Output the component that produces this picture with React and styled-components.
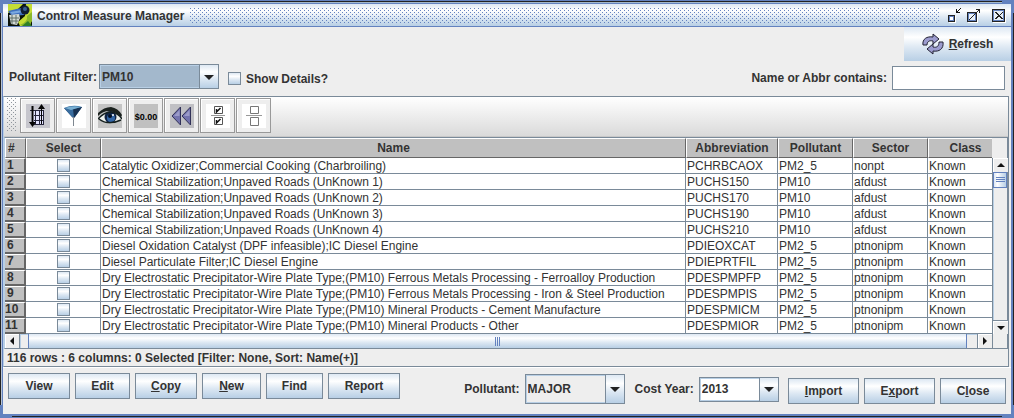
import React from 'react';
import styled, { createGlobalStyle, css } from 'styled-components';

const c = {
  blue: '#6382bf',
  line: '#7a8a99',
  text: '#333333',
  panel: '#eeeeee',
  header: '#c0c0c0',
};
const ocean = 'linear-gradient(#dde8f3, #ffffff 30%, #dde8f3 60%, #b8cfe5)';
const oceanSide = 'linear-gradient(90deg, #dde8f3, #ffffff 30%, #dde8f3 60%, #b8cfe5)';

const dots = (color) => css`
  background-image:
    conic-gradient(from 270deg at 1px 1px, ${color} 90deg, transparent 0),
    conic-gradient(from 270deg at 1px 1px, ${color} 90deg, transparent 0);
  background-size: 4px 4px;
  background-position: 0 0, 2px 2px;
`;

const Global = createGlobalStyle`
  *, *::before, *::after { box-sizing: border-box; }
  body { margin: 0; background: ${c.blue}; }
  body, button, input, select {
    font: bold 12px/14px "Liberation Sans", Arial, sans-serif;
    color: ${c.text};
  }
  button { margin: 0; padding: 0; border: 0; background: none; }
  svg { display: block; }
`;

const Frame = styled.div`
  padding: 4px 3px;
  min-height: 100vh;
  background:
    linear-gradient(#222, #222) 12px 1px / calc(100% - 24px) 1px no-repeat,
    linear-gradient(#a3b8cc, #a3b8cc) 12px 2px / calc(100% - 24px) 1px no-repeat,
    linear-gradient(#222, #222) 12px calc(100% - 1px) / calc(100% - 24px) 1px no-repeat,
    linear-gradient(#222, #222) 0 13px / 1px calc(100% - 26px) no-repeat,
    linear-gradient(#b8c4d4, #b8c4d4) 1px 13px / 1px calc(100% - 26px) no-repeat,
    linear-gradient(#222, #222) 100% 13px / 1px calc(100% - 26px) no-repeat,
    ${c.blue};
`;

const TitleBar = styled.header`
  display: flex;
  align-items: center;
  height: 23px;
  padding: 0 4px 0 5px;
  border-bottom: 1px solid ${c.blue};
  background: ${ocean};
`;

const Title = styled.h1`
  margin: 0 6px 0 5px;
  padding-top: 1px;
  font-size: 12px;
  line-height: 14px;
  white-space: nowrap;
`;

const TitleDots = styled.div`
  flex: 1;
  height: 15px;
  margin-right: 7px;
  ${dots(c.blue)}
`;

const WindowButtons = styled.div`
  display: flex;
  gap: 3px;
`;

const WindowButton = styled.button`
  width: 16px;
  height: 18px;
  &:last-child { margin-left: 6px; }
`;

const Body = styled.main`
  background: ${c.panel};
  padding-bottom: 10px;
`;

const RefreshRow = styled.div`
  display: flex;
  justify-content: flex-end;
`;

const RefreshButton = styled.button`
  display: flex;
  align-items: center;
  justify-content: center;
  gap: 5px;
  width: 107px;
  height: 34px;
  background: ${ocean};
`;

const FilterRow = styled.div`
  display: flex;
  align-items: flex-start;
  justify-content: space-between;
  padding: 3px 6px 6px;
`;

const Group = styled.div`
  display: flex;
  align-items: center;
  gap: ${(p) => p.$gap || 5}px;
  padding-top: ${(p) => p.$drop || 0}px;
`;

const Label = styled.label`
  white-space: nowrap;
`;

const Combo = styled.div`
  position: relative;
  width: ${(p) => p.$width}px;
  height: ${(p) => p.$height || 25}px;
  border: 1px solid ${c.line};
  &::before {
    content: '';
    position: absolute;
    right: 0;
    top: 0;
    bottom: 0;
    width: 19px;
    border-left: 1px solid ${c.line};
    background: ${ocean};
    pointer-events: none;
  }
  &::after {
    content: '';
    position: absolute;
    right: 4px;
    top: calc(50% - 2px);
    border: 5px solid transparent;
    border-top-color: #222;
    border-bottom-width: 0;
    pointer-events: none;
  }
`;

const Select = styled.select`
  appearance: none;
  display: block;
  width: 100%;
  height: 100%;
  padding: 0 20px 0 1px;
  border: 1px solid #b8cfe5;
  border-radius: 0;
  outline: 0;
  background: ${(p) => p.$fill};
`;

const CheckBox = styled.input`
  appearance: none;
  display: block;
  flex: none;
  width: 13px;
  height: 13px;
  margin: 0;
  border: 1px solid ${c.line};
  background: ${ocean};
`;

const TextBox = styled.input`
  width: 113px;
  height: 24px;
  padding: 0 3px;
  border: 1px solid ${c.line};
  border-radius: 0;
  background: #fff;
`;

const TablePanel = styled.section`
  margin-right: 2px;
  border: 1px solid ${c.line};
  border-left-color: #b8cfe5;
`;

const Toolbar = styled.div`
  display: flex;
  gap: 1px;
  height: 40px;
  padding: 1px 3px 4px;
  border-bottom: 1px solid #c8c8c8;
  background: linear-gradient(#ffffff, #dadada);
`;

const Grip = styled.div`
  width: 10px;
  margin-right: 2px;
  ${dots('#8f959c')}
`;

const ToolButton = styled.button`
  display: grid;
  place-items: center;
  width: 35px;
  height: 35px;
  border: 1px solid #999;
  background: ${c.panel};
  box-shadow: inset 1px 1px #fff;
`;

const ScrollPane = styled.div`
  display: grid;
  grid-template-columns: minmax(0, 1fr) 15px;
  border: 1px solid ${c.line};
  border-left-color: #b8cfe5;
`;

const Viewport = styled.div`
  overflow: hidden;
`;

const Table = styled.table`
  width: calc(100% + 11px);
  table-layout: fixed;
  border-collapse: separate;
  border-spacing: 0;
  background: #fff;
`;

const Col = styled.col`
  width: ${(p) => (p.$width ? `${p.$width}px` : 'auto')};
`;

const HeadCell = styled.th`
  height: 20px;
  padding: 0;
  border: 1px solid #fff;
  border-right-color: #666;
  border-bottom-color: #666;
  background: ${c.header};
  text-align: ${(p) => p.$align || 'center'};
  ${(p) => p.$align && 'padding-left: 2px;'}
`;

const RowHead = styled.th`
  height: 16px;
  padding: 0;
  border: 1px solid #fff;
  border-left: 0;
  border-right: 2px solid #666;
  border-bottom: 2px solid #666;
  background: ${c.header};
  line-height: 13px;
  text-align: left;
  text-indent: ${(p) => (p.$wide ? 0 : 2)}px;
`;

const Cell = styled.td`
  height: 16px;
  padding: 1px 0 0 1px;
  border-right: 1px solid ${c.line};
  border-bottom: 1px solid ${c.line};
  font-weight: normal;
  line-height: 14px;
  white-space: nowrap;
  overflow: hidden;
`;

const CheckCell = styled(Cell)`
  padding: 0;
  ${CheckBox} { margin: 0 auto; }
`;

const VBar = styled.div`
  display: flex;
  flex-direction: column;
  margin-top: 20px;
  border-left: 1px solid ${c.line};
`;

const HBar = styled.div`
  display: flex;
  height: 14px;
`;

const ScrollButton = styled.button`
  display: grid;
  place-items: center;
  flex: none;
  width: 15px;
  height: 14px;
  background: ${c.panel};
  border: 0 solid ${c.line};
  box-shadow: inset 1px 1px #fff;
  ${(p) => p.$edge && `border-${p.$edge}-width: 1px;`}
`;

const Track = styled.div`
  flex: 1;
  display: flex;
  flex-direction: ${(p) => (p.$vertical ? 'column' : 'row')};
  padding: ${(p) => (p.$vertical ? '0' : '0 10px 0 8px')};
  background: ${c.panel};
  box-shadow: inset 1px 1px #b8cfe5;
`;

const Thumb = styled.div`
  display: grid;
  place-items: center;
  flex: ${(p) => (p.$vertical ? 'none' : 1)};
  height: ${(p) => (p.$vertical ? 16 : 14)}px;
  border: 1px solid ${c.blue};
  ${(p) => !p.$vertical && 'border-bottom: 0; border-top: 0;'}
  background: ${(p) => (p.$vertical ? oceanSide : ocean)};
`;

const Corner = styled.div`
  border-left: 1px solid ${c.line};
`;

const Status = styled.div`
  height: 17px;
  padding: 2px 3px 0;
  line-height: 14px;
`;

const Footer = styled.footer`
  display: flex;
  align-items: flex-start;
  justify-content: space-between;
  padding: 5px 5px 0;
  border-top: 1px solid #fff;
`;

const Push = styled.button`
  width: ${(p) => p.$width}px;
  height: 26px;
  border: 1px solid ${c.line};
  background: ${ocean};
`;

const Choices = styled.div`
  display: flex;
  gap: 10px;
  margin: 1px 0 0 55px;
`;

const DukeIcon = () => (
  <svg width="24" height="22" viewBox="0 0 24 22" aria-hidden="true">
    <rect width="24" height="22" fill="#0b1208" />
    <path d="M0 0H15L10 5 0 9zM18 0H24V17Q20 22 12 22L10 18 17 12z" fill="#c4dd35" />
    <path d="M19 12Q20 18 12 21L22 22 24 16V8z" fill="#8cb828" />
    <path d="M0 7 13 4 18 8 16 11 4 12z" fill="#3f6fbd" />
    <path d="M2 8 14 6 15 8 4 10z" fill="#79a8df" />
    <circle cx="17" cy="6" r="4.5" fill="#111d32" />
    <circle cx="17" cy="5" r="2" fill="#385f92" />
    <path d="M1 11 11 10 12 14 9 21 3 20z" fill="#d3d9d4" />
    <path d="M4 11V20M8 11V20M2 14H11M2 17H10" stroke="#60706a" fill="none" />
    <path d="M14 22 20 17 24 22z" fill="#2d7f28" />
  </svg>
);

const MinimizeIcon = () => (
  <svg width="16" height="16" shapeRendering="crispEdges">
    <path d="M2 15.5H8.5V9" fill="none" stroke="#fff" />
    <rect x="1.5" y="8.5" width="6" height="6" fill="#fff" stroke="#222" />
    <rect x="2.5" y="9.5" width="4" height="4" fill="#fff" stroke={c.blue} />
    <path d="M9 2h1v3h-1zM9 5h4v1H9zM10 4h1v1h-1zM11 3h1v1h-1zM12 2h1v1h-1zM13 1h1v1h-1z" fill="#111" />
  </svg>
);

const MaximizeIcon = () => (
  <svg width="16" height="16" shapeRendering="crispEdges">
    <path d="M2 15.5H11.5V6" fill="none" stroke="#fff" />
    <rect x="1.5" y="5.5" width="9" height="9" fill="#fff" stroke="#222" />
    <rect x="2.5" y="6.5" width="7" height="7" fill="#e8f0f8" stroke={c.blue} />
    <path d="M3 12h1v1H3zM4 11h1v1H4zM5 10h1v1H5zM6 9h1v1H6zM7 8h1v1H7zM8 7h1v1H8zM9 6h1v1H9zM10 5h1v1h-1zM11 4h1v1h-1zM12 3h1v1h-1zM10 2h4v1h-4zM13 3h1v3h-1z" fill="#222" />
  </svg>
);

const CloseIcon = () => (
  <svg width="16" height="16" shapeRendering="crispEdges">
    <path d="M2 15.5H14.5V3" stroke="#fff" fill="none" />
    <rect x="1.5" y="2.5" width="12" height="12" fill="#e8f0f8" stroke="#222" />
    <rect x="2.5" y="3.5" width="10" height="10" fill="none" stroke={c.blue} />
    <path d="M4 5h2v1h1v1h1v1h1V7h1V6h1V5h1v1h-1v1h-1v1H9v1h1v1h1v1h1v1h-2v-1H9v-1H7v1H6v1H4v-1h1v-1h1V9h1V8H6V7H5V6H4z" fill="#222" />
  </svg>
);

const RefreshIcon = () => (
  <svg width="22" height="22" viewBox="0 0 22 22" aria-hidden="true">
    <g fill="#9c9ccf" stroke="#222233" strokeLinejoin="round">
      <path d="M1 12C0 6 5 3 11 4V1L17 6 11 11V8C7 7 5 9 5 12z" />
      <path d="M21 9C22 16 17 19 11 18V21L5 16 11 11V14C15 15 17 13 17 9z" />
    </g>
  </svg>
);

const tile = (fill, body) => (
  <svg width="24" height="24" viewBox="0 0 24 24" aria-hidden="true">
    <rect width="24" height="24" fill={fill} />
    {body}
  </svg>
);

const tools = [
  ['Sort', tile('#c6c6cd', (
    <>
      <path d="M5 6H17V21H5z" fill="#e3e3ff" />
      <path d="M4 6.5H17.5V20.5H8M9.5 6V21M13.500 6V21M17.500 6V21M8 11.500H18M8 16.500H18" stroke="#26263d" fill="none" />
      <path d="M6.500 2V20" stroke="#050505" strokeWidth="2" />
      <path d="M15.500 4V20" stroke="#050505" />
      <path d="M3 18H10L6.500 23zM12 5 15.500 0 19 5z" fill="#050505" />
    </>
  ))],
  ['Filter', tile('#fff', (
    <>
      <path d="M2 4 11 14 11 22H12L12 14 20 3z" fill="#253d61" />
      <path d="M2 4Q11 0 20 3L13 13 10 13z" fill="#396d9f" />
      <path d="M11 5 20 3 12 14z" fill="#183252" />
      <path d="M3 4Q11 1 19 3L9 6z" fill="#78afd2" />
      <path d="M11.500 13V22" stroke="#7e8790" />
    </>
  ))],
  ['View', tile('#c4c4c4', (
    <>
      <path d="M0 9Q6 3 13 3 20 4 24 11L23 13Q17 7 11 7 5 7 0 12z" fill="#1b211e" />
      <path d="M1 15Q7 8 14 8 20 9 24 15 18 20 11 20 5 19 1 15z" fill="#edf0ec" />
      <circle cx="12.500" cy="13" r="6" fill="#102341" />
      <circle cx="13" cy="14" r="4" fill="#3266a6" />
      <circle cx="12" cy="12" r="2" fill="#061020" />
      <circle cx="15" cy="11" r="1" fill="#fff" />
      <path d="M0 15Q7 7 14 8 20 9 24 15M1 15Q10 22 23 16" fill="none" stroke="#15201f" strokeWidth="1.500" />
    </>
  ))],
  ['Format', tile('#c0c0c0', (
    <text x="12" y="16" textAnchor="middle" fontFamily="Liberation Sans" fontWeight="bold" fontSize="9" fill="#000">$0.00</text>
  ))],
  ['Reset', tile('#c0c0c4', (
    <>
      <path d="M10.500 3V21L2 12zM20.500 3V21L12 12z" fill="#7373ae" stroke="#313158" />
      <path d="M9.500 6V12H4zM19.500 6V12H14z" fill="#9b9bc9" />
    </>
  ))],
  ['Select all', tile('#fff', (
    <>
      <path d="M5 11.500H19" stroke="#999" />
      <path d="M8.500 2.500H16.500V9.500H8.500zM8.500 13.500H16.500V20.500H8.500z" fill="#fff" stroke="#555" />
      <path d="M10.500 5V8L14.500 4M10.500 16V19L14.500 15" fill="none" stroke="#111" strokeWidth="1.500" />
    </>
  ))],
  ['Clear all', tile('#fff', (
    <>
      <path d="M4 11.500H20" stroke="#999" />
      <path d="M8.500 2.500H16.500V9.500H8.500zM8.500 13.500H16.500V21.500H8.500z" fill="#fff" stroke="#777" />
    </>
  ))],
];

const arrows = {
  up: 'M0 6 4 2 8 6z',
  down: 'M0 2H8L4 6z',
  left: 'M6 0V8L2 4z',
  right: 'M2 0V8L6 4z',
};
const Arrow = ({ dir }) => (
  <svg width="8" height="8" aria-hidden="true"><path d={arrows[dir]} fill="#111" /></svg>
);

const dry = 'Dry Electrostatic Precipitator-Wire Plate Type;(PM10) ';
const rows = [
  ['Catalytic Oxidizer;Commercial Cooking (Charbroiling)', 'PCHRBCAOX', 'PM2_5', 'nonpt'],
  ['Chemical Stabilization;Unpaved Roads (UnKnown 1)', 'PUCHS150', 'PM10', 'afdust'],
  ['Chemical Stabilization;Unpaved Roads (UnKnown 2)', 'PUCHS170', 'PM10', 'afdust'],
  ['Chemical Stabilization;Unpaved Roads (UnKnown 3)', 'PUCHS190', 'PM10', 'afdust'],
  ['Chemical Stabilization;Unpaved Roads (UnKnown 4)', 'PUCHS210', 'PM10', 'afdust'],
  ['Diesel Oxidation Catalyst (DPF infeasible);IC Diesel Engine', 'PDIEOXCAT', 'PM2_5', 'ptnonipm'],
  ['Diesel Particulate Filter;IC Diesel Engine', 'PDIEPRTFIL', 'PM2_5', 'ptnonipm'],
  [`${dry}Ferrous Metals Processing - Ferroalloy Production`, 'PDESPMPFP', 'PM2_5', 'ptnonipm'],
  [`${dry}Ferrous Metals Processing - Iron & Steel Production`, 'PDESPMPIS', 'PM2_5', 'ptnonipm'],
  [`${dry}Mineral Products - Cement Manufacture`, 'PDESPMICM', 'PM2_5', 'ptnonipm'],
  [`${dry}Mineral Products - Other`, 'PDESPMIOR', 'PM2_5', 'ptnonipm'],
];
const columns = [['Select', 75], ['Name', 0], ['Abbreviation', 92], ['Pollutant', 75], ['Sector', 75], ['Class', 75]];

export default function App() {
  return (
    <Frame>
      <Global />
      <TitleBar>
        <DukeIcon />
        <Title>Control Measure Manager</Title>
        <TitleDots />
        <WindowButtons>
          <WindowButton aria-label="Minimize"><MinimizeIcon /></WindowButton>
          <WindowButton aria-label="Maximize"><MaximizeIcon /></WindowButton>
          <WindowButton aria-label="Close window"><CloseIcon /></WindowButton>
        </WindowButtons>
      </TitleBar>
      <Body>
        <RefreshRow>
          <RefreshButton><RefreshIcon /><span><u>R</u>efresh</span></RefreshButton>
        </RefreshRow>
        <FilterRow>
          <Group $gap={9}>
            <Group $gap={2}>
              <Label htmlFor="filter">Pollutant Filter:</Label>
              <Combo $width={120}>
                <Select id="filter" $fill="#a3b8cc"><option>PM10</option></Select>
              </Combo>
            </Group>
            <Group $drop={4}>
              <CheckBox type="checkbox" id="details" />
              <Label htmlFor="details">Show Details?</Label>
            </Group>
          </Group>
          <Group $drop={2}>
            <Label htmlFor="contains">Name or Abbr contains:</Label>
            <TextBox id="contains" type="text" />
          </Group>
        </FilterRow>
        <TablePanel>
          <Toolbar>
            <Grip />
            {tools.map(([name, icon]) => (
              <ToolButton key={name} aria-label={name}>{icon}</ToolButton>
            ))}
          </Toolbar>
          <ScrollPane>
            <Viewport>
              <Table>
                <colgroup>
                  <Col $width={21} />
                  {columns.map(([name, width]) => <Col key={name} $width={width} />)}
                </colgroup>
                <thead>
                  <tr>
                    <HeadCell $align="left">#</HeadCell>
                    {columns.map(([name]) => <HeadCell key={name}>{name}</HeadCell>)}
                  </tr>
                </thead>
                <tbody>
                  {rows.map((row, i) => (
                    <tr key={row[1]}>
                      <RowHead $wide={i > 8}>{i + 1}</RowHead>
                      <CheckCell><CheckBox type="checkbox" aria-label={`Select ${row[1]}`} /></CheckCell>
                      {row.map((value) => <Cell key={value}>{value}</Cell>)}
                      <Cell>Known</Cell>
                    </tr>
                  ))}
                </tbody>
              </Table>
            </Viewport>
            <VBar>
              <ScrollButton aria-label="Scroll up"><Arrow dir="up" /></ScrollButton>
              <Track $vertical>
                <Thumb $vertical>
                  <svg width="9" height="6"><path d="M0 .5H9M0 2.500H9M0 4.500H9" stroke={c.blue} /></svg>
                </Thumb>
              </Track>
              <ScrollButton aria-label="Scroll down" $edge="top"><Arrow dir="down" /></ScrollButton>
            </VBar>
            <HBar>
              <ScrollButton aria-label="Scroll left" $edge="right"><Arrow dir="left" /></ScrollButton>
              <Track>
                <Thumb>
                  <svg width="6" height="9"><path d="M.5 0V9M2.500 0V9M4.500 0V9" stroke={c.blue} /></svg>
                </Thumb>
              </Track>
              <ScrollButton aria-label="Scroll right" $edge="left"><Arrow dir="right" /></ScrollButton>
            </HBar>
            <Corner />
          </ScrollPane>
          <Status>116 rows : 6 columns: 0 Selected [Filter: None, Sort: Name(+)]</Status>
        </TablePanel>
        <Footer>
          <Group>
            <Push $width={62}>View</Push>
            <Push $width={55}>Edit</Push>
            <Push $width={62}><u>C</u>opy</Push>
            <Push $width={59}><u>N</u>ew</Push>
            <Push $width={57}>Find</Push>
            <Push $width={72}>Report</Push>
          </Group>
          <Choices>
            <Group>
              <Label htmlFor="pollutant">Pollutant:</Label>
              <Combo $width={100} $height={30}>
                <Select id="pollutant" $fill={c.panel}><option>MAJOR</option></Select>
              </Combo>
            </Group>
            <Group>
              <Label htmlFor="year">Cost Year:</Label>
              <Combo $width={80}>
                <Select id="year" $fill="#fff"><option>2013</option></Select>
              </Combo>
            </Group>
          </Choices>
          <Group $drop={5}>
            <Push $width={71}><u>I</u>mport</Push>
            <Push $width={71}>E<u>x</u>port</Push>
            <Push $width={66}>C<u>l</u>ose</Push>
          </Group>
        </Footer>
      </Body>
    </Frame>
  );
}
